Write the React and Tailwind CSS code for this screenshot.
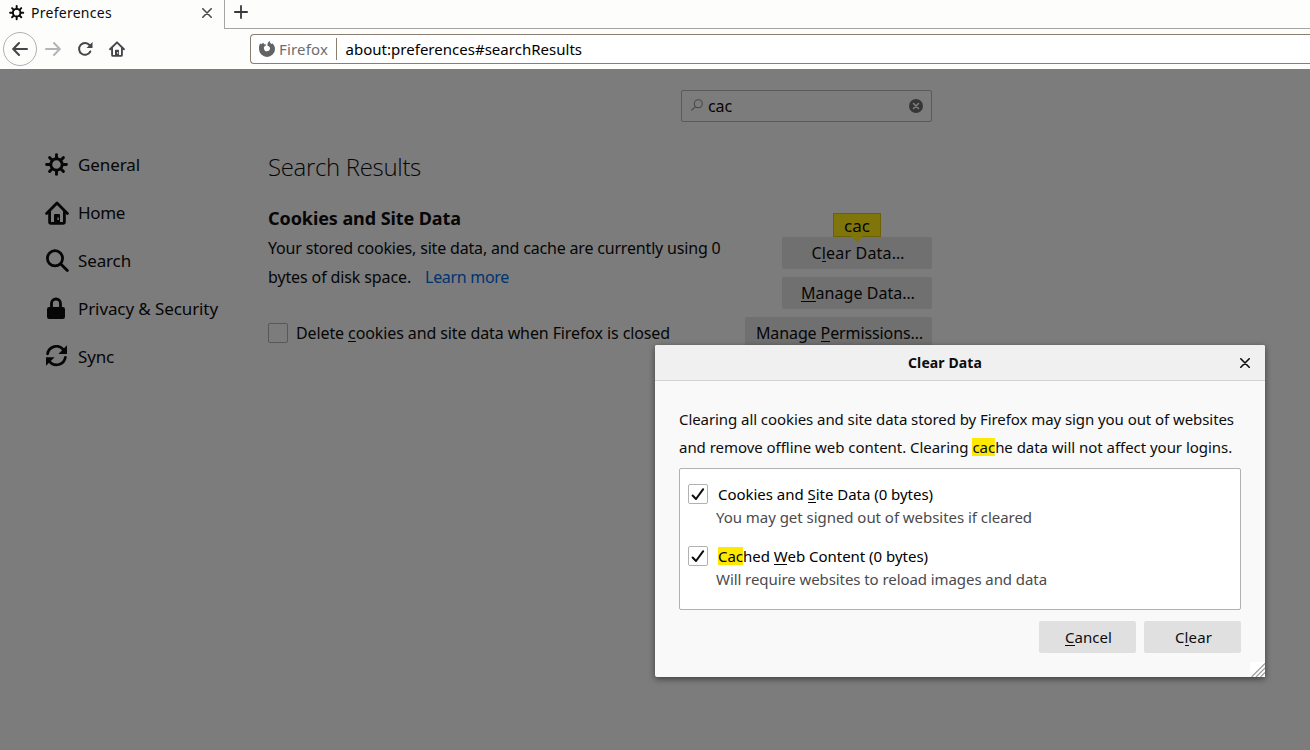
import React from 'react';

function Gear({ className }) {
  return (
    <svg viewBox="0 0 24 24" className={className} fill="none" stroke="currentColor" strokeWidth="2.9" strokeLinecap="round">
      <circle cx="11.500" cy="11.500" r="5.700" />
      <path d="M11.500 5.500V1.600M11.500 17.500v3.900M5.500 11.500H1.600M17.500 11.500h3.900M7.300 7.300L4.600 4.600M15.700 7.300l2.700-2.700M7.300 15.700l-2.700 2.700M15.700 15.700l2.700 2.700" />
    </svg>
  );
}

function HomeIcon({ className }) {
  return (
    <svg viewBox="0 0 24 24" className={className} fill="none" stroke="currentColor" strokeWidth="2.8" strokeLinecap="round" strokeLinejoin="round">
      <path d="M1.600 12.400L12 2l10.400 10.400" />
      <path d="M4.600 11v10q0 1.400 1.400 1.400h12q1.400 0 1.400-1.400V11" />
      <path d="M9 22.500v-8.500q0-1 1-1h4q1 0 1 1v8.500zM12.400 16.500v2.500h1.400v-2.500z" fill="currentColor" fillRule="evenodd" stroke="none" />
    </svg>
  );
}

function SearchIcon({ className }) {
  return (
    <svg viewBox="0 0 24 24" className={className} fill="none" stroke="currentColor" strokeWidth="2.8" strokeLinecap="round">
      <circle cx="10" cy="9.300" r="7.600" />
      <path d="M15.800 15.100L22.300 21.600" />
    </svg>
  );
}

function Lock({ className }) {
  return (
    <svg viewBox="0 0 24 24" className={className}>
      <path d="M6.500 11V6.500a4.500 4.500 0 0 1 9 0V11" fill="none" stroke="currentColor" strokeWidth="2.800" />
      <rect x="2" y="10" width="18" height="12" rx="2.200" fill="currentColor" />
    </svg>
  );
}

function Sync({ className }) {
  return (
    <svg viewBox="0 0 24 24" className={className} fill="none" stroke="currentColor" strokeWidth="2.700" strokeLinecap="round">
      <path d="M2.600 8.800A9 9 0 0 1 18.200 4.300M20.400 12.300A9 9 0 0 1 4.800 16.800" />
      <path d="M22 .3v8.600h-8.600zM1 20.800v-8.600h8.600z" fill="currentColor" stroke="none" />
    </svg>
  );
}

function Cross({ className }) {
  return (
    <svg viewBox="0 0 10 10" className={className} fill="none" stroke="currentColor" strokeWidth="1.600" strokeLinecap="round">
      <path d="M.8.8l8.400 8.400M9.200.8L.8 9.200" />
    </svg>
  );
}

function Key({ children }) {
  return <span className="bg-[linear-gradient(currentColor,currentColor)] bg-[length:100%_1px] bg-[position:0_calc(100%-2px)] bg-no-repeat">{children}</span>;
}

function DialogKey({ children }) {
  return <span className="bg-[linear-gradient(currentColor,currentColor)] bg-[length:100%_1px] bg-[position:0_calc(100%-1px)] bg-no-repeat">{children}</span>;
}

function TabStrip() {
  return (
    <div className="flex h-[29px] text-[#0c0c0d]">
      <div className="flex w-[224px] items-center pb-[3px] pl-[9px] pr-[12px]">
        <Gear className="h-4 w-4 shrink-0" />
        <span className="-mt-px ml-1.5 text-[14px] tracking-[0.27px]">Preferences</span>
        <Cross className="ml-auto h-2.5 w-2.5 text-[#4a4a4f]" />
      </div>
      <div className="flex flex-1 border-b border-l border-[#a5a5a5] pl-[9px] pt-[5px]">
        <svg viewBox="0 0 14 14" className="h-3.5 w-3.5" fill="none" stroke="#38383d" strokeWidth="1.800" strokeLinecap="round">
          <path d="M7 .9v12.200M.9 7h12.200" />
        </svg>
      </div>
    </div>
  );
}

function NavBar() {
  return (
    <div className="flex h-10 items-center pl-[3px] text-[#45454a]">
      <div className="flex h-[34px] w-[34px] shrink-0 items-center justify-center rounded-full border border-[#b1b1b1]">
        <svg viewBox="0 0 16 16" className="h-4 w-4" fill="none" stroke="currentColor" strokeWidth="2" strokeLinecap="round" strokeLinejoin="round">
          <path d="M15 8H1.500M7 2L1.200 8L7 14" />
        </svg>
      </div>
      <svg viewBox="0 0 16 16" className="ml-2 h-4 w-4 text-[#b5b5b7]" fill="none" stroke="currentColor" strokeWidth="2" strokeLinecap="round" strokeLinejoin="round">
        <path d="M1 8h13.500M9 2l5.800 6L9 14" />
      </svg>
      <svg viewBox="0 0 16 16" className="ml-4 h-4 w-4" fill="none" stroke="currentColor" strokeWidth="2" strokeLinecap="round">
        <path d="M13.300 10.500A5.900 5.900 0 1 1 12.600 4.200" />
        <path d="M15.500 1v6h-6z" fill="currentColor" stroke="none" />
      </svg>
      <HomeIcon className="ml-4 h-4 w-4" />
      <div className="ml-[125px] flex h-[30px] flex-1 items-center rounded-l border border-r-0 border-[#8b7d70] bg-white pl-2">
        <svg viewBox="0 0 16 16" className="h-4 w-4 shrink-0 text-[#636366]">
          <path fill="currentColor" d="M1.200 2.300C1.400 3 1.800 3.300 2.300 3.300C3 2.500 3.900 2 4.700 1.700C4.500 2.500 4.700 3.100 5.500 3.300L7.300 3.600C7.200 4.500 6.300 4.700 5.700 5C5.500 5.500 5.300 6 4.800 6.400C5 9 6 10.300 8 10.300C10.300 10.300 11.400 8.600 10.900 6.600C10.500 5.500 9.600 5 8.600 5C8.200 2.800 9 .9 10.700 0C10.700 1.500 11.500 2.200 12.600 3L13.200 2.200C15 3.600 16 5.700 16 8A8 7.900 0 0 1 0 8C0 5.800.2 4 1.200 2.300Z" />
        </svg>
        <span className="ml-1 text-[15px] tracking-[0.16px] text-[#6d6d70]">Firefox</span>
        <div className="ml-2 h-[22px] w-px bg-[#8b7d70]" />
        <span className="ml-[8.500px] text-[15px] tracking-[0.02px] text-black">about:preferences#searchResults</span>
      </div>
    </div>
  );
}

function NavItem({ icon: Icon, label, className }) {
  return (
    <div className="flex h-12 items-center gap-[9px]">
      <Icon className="h-6 w-6 shrink-0" />
      <span className={className}>{label}</span>
    </div>
  );
}

function Sidebar() {
  return (
    <div className="w-[223px] shrink-0 pt-[72px] text-[17px] text-[#060606]">
      <NavItem icon={Gear} label="General" className="tracking-[-0.09px]" />
      <NavItem icon={HomeIcon} label="Home" className="tracking-[-0.34px]" />
      <NavItem icon={SearchIcon} label="Search" className="tracking-[-0.13px]" />
      <NavItem icon={Lock} label="Privacy & Security" className="tracking-[-0.1px]" />
      <NavItem icon={Sync} label="Sync" className="tracking-[-0.17px]" />
    </div>
  );
}

function Results() {
  return (
    <div className="flex w-[664px] flex-col text-[16px] text-[#060606]">
      <div className="mt-[21px] flex h-8 w-[251px] items-center self-end rounded-[2px] border border-[#5a5a5a] pl-[9px] pr-2">
        <svg viewBox="0 0 12 12" className="-mt-0.5 h-3 w-3" fill="none" stroke="#484848" strokeWidth="1.100" strokeLinecap="round">
          <circle cx="7.300" cy="4.700" r="4" />
          <path d="M4.400 7.600L.8 11.200" />
        </svg>
        <span className="ml-[5px] tracking-[-0.11px]">cac</span>
        <svg viewBox="0 0 14 14" className="-mt-px ml-auto h-3.5 w-3.5">
          <circle cx="7" cy="7" r="7" fill="#363636" />
          <path d="M4.500 4.500l5 5M9.500 4.500l-5 5" stroke="#7d7d7d" strokeWidth="1.600" strokeLinecap="round" />
        </svg>
      </div>
      <h1 className="mt-[29px] font-['Open_Sans'] text-[24px] font-light leading-8 tracking-[-0.33px]">Search Results</h1>
      <div className="mt-[19px] flex justify-between">
        <div>
          <h2 className="text-[18px] font-bold leading-8 tracking-[-0.08px]">Cookies and Site Data</h2>
          <p className="leading-[29px]">
            <span className="block tracking-[-0.177px]">Your stored cookies, site data, and cache are currently using 0</span>
            <span className="tracking-[-0.12px]">bytes of disk space.</span>
            <span className="ml-[14px] tracking-[-0.3px] text-[#00336f]">Learn more</span>
          </p>
          <div className="mt-[26px] flex h-[30px] items-center gap-2">
            <div className="h-5 w-5 rounded-[2px] border border-[#585858]" />
            <span className="tracking-[-0.107px]">Delete <Key>c</Key>ookies and site data when Firefox is closed</span>
          </div>
        </div>
        <div className="flex flex-col items-end gap-2 pt-[35px]">
          <div className="relative flex h-8 w-[150px] items-center justify-center rounded-[2px] bg-[#707070] pl-0.5">
            <span className="tracking-[0.17px]">C<Key>l</Key>ear Data…</span>
            <div className="absolute -top-6 left-[51px] flex h-6 w-12 items-center justify-center border border-[#6c6300] bg-[#80750b] pt-0.5 text-[17px]">
              cac
              <svg viewBox="0 0 12 7" className="absolute left-[17px] top-[22px] h-[7px] w-3">
                <path d="M0 0h12L6 6.500z" fill="#80750b" />
              </svg>
            </div>
          </div>
          <div className="flex h-8 w-[150px] items-center justify-center rounded-[2px] bg-[#707070] pl-0.5">
            <span className="tracking-[0.05px]"><Key>M</Key>anage Data…</span>
          </div>
          <div className="flex h-8 w-[187px] items-center justify-center rounded-[2px] bg-[#707070] pl-0.5">
            <span className="tracking-[-0.11px]">Manage <Key>P</Key>ermissions…</span>
          </div>
        </div>
      </div>
    </div>
  );
}

function Option({ title, note }) {
  return (
    <div className="flex h-[62px] gap-2 pl-2 pt-[15px]">
      <div className="flex h-5 w-5 items-center justify-center rounded-[2px] border border-[#b1b1b1] bg-white">
        <svg viewBox="0 0 14 14" className="h-3.5 w-3.5" fill="none" stroke="#0c0c0d" strokeWidth="2" strokeLinecap="round" strokeLinejoin="round">
          <path d="M1.600 8.500L5 12L12.200 2.200" />
        </svg>
      </div>
      <div className="leading-[23px]">
        <div className="-mt-px pl-0.5 text-black">{title}</div>
        <div className="text-[#4a4a4d]">{note}</div>
      </div>
    </div>
  );
}

function ClearDataDialog() {
  return (
    <div className="absolute left-[655px] top-[345px] flex h-[332px] w-[610px] flex-col rounded-[2px] bg-[#f9f9fa] text-[15px] text-[#0c0c0d] shadow-[0_2px_6px_rgba(0,0,0,0.5)]">
      <div className="grid h-9 shrink-0 grid-cols-[1fr_auto_1fr] items-center rounded-t-[2px] border-b border-[#d2d2d4] bg-[#f0f0f0] px-[15px]">
        <span className="col-start-2 pr-[30px] text-[14px] font-bold tracking-[0.11px]">Clear Data</span>
        <Cross className="h-2.5 w-2.5 justify-self-end" />
      </div>
      <div className="flex-1 px-6 pt-6">
        <p className="leading-7">
          <span className="block tracking-[-0.07px]">Clearing all cookies and site data stored by Firefox may sign you out of websites</span>
          <span className="block tracking-[-0.034px]">
            and remove offline web content. Clearing <span className="bg-[linear-gradient(#ffe900,#ffe900)] bg-[length:100%_18px] bg-center bg-no-repeat">cac</span>he data will not affect your logins.
          </span>
        </p>
        <div className="mt-[7px] h-[142px] rounded-[2px] border border-[#b1b1b1] bg-white">
          <Option
            title={<span className="tracking-[-0.03px]">Cookies and <DialogKey>S</DialogKey>ite Data (0 bytes)</span>}
            note={<span className="tracking-[-0.04px]">You may get signed out of websites if cleared</span>}
          />
          <Option
            title={<span className="tracking-[-0.02px]"><span className="bg-[linear-gradient(#ffe900,#ffe900)] bg-[length:100%_18px] bg-center bg-no-repeat">Cac</span>hed <DialogKey>W</DialogKey>eb Content (0 bytes)</span>}
            note={<span className="tracking-[-0.075px]">Will require websites to reload images and data</span>}
          />
        </div>
        <div className="mt-[11px] flex justify-end gap-2">
          <div className="flex h-8 w-[97px] items-center justify-center rounded-[2px] bg-[#e0e0e1] pl-0.5 tracking-[0.05px]">
            <span><DialogKey>C</DialogKey>ancel</span>
          </div>
          <div className="flex h-8 w-[97px] items-center justify-center rounded-[2px] bg-[#e0e0e1] pl-0.5 tracking-[0.11px]">
            <span>C<DialogKey>l</DialogKey>ear</span>
          </div>
        </div>
      </div>
      <svg viewBox="0 0 15 15" className="absolute bottom-0 right-0 h-[15px] w-[15px] bg-white" fill="none" stroke="#a0a0a0" strokeWidth="1.300">
        <path d="M1.500 15L15 1.500M6 15l9-9M10.500 15l4.500-4.500" />
      </svg>
    </div>
  );
}

export default function App() {
  return (
    <div className="relative flex h-[750px] w-[1310px] flex-col overflow-hidden whitespace-nowrap bg-[#fdfdfc] font-['Noto_Sans',sans-serif]">
      <TabStrip />
      <NavBar />
      <div className="flex flex-1 bg-[#7c7c7c] pl-[45px]">
        <Sidebar />
        <Results />
      </div>
      <ClearDataDialog />
    </div>
  );
}
